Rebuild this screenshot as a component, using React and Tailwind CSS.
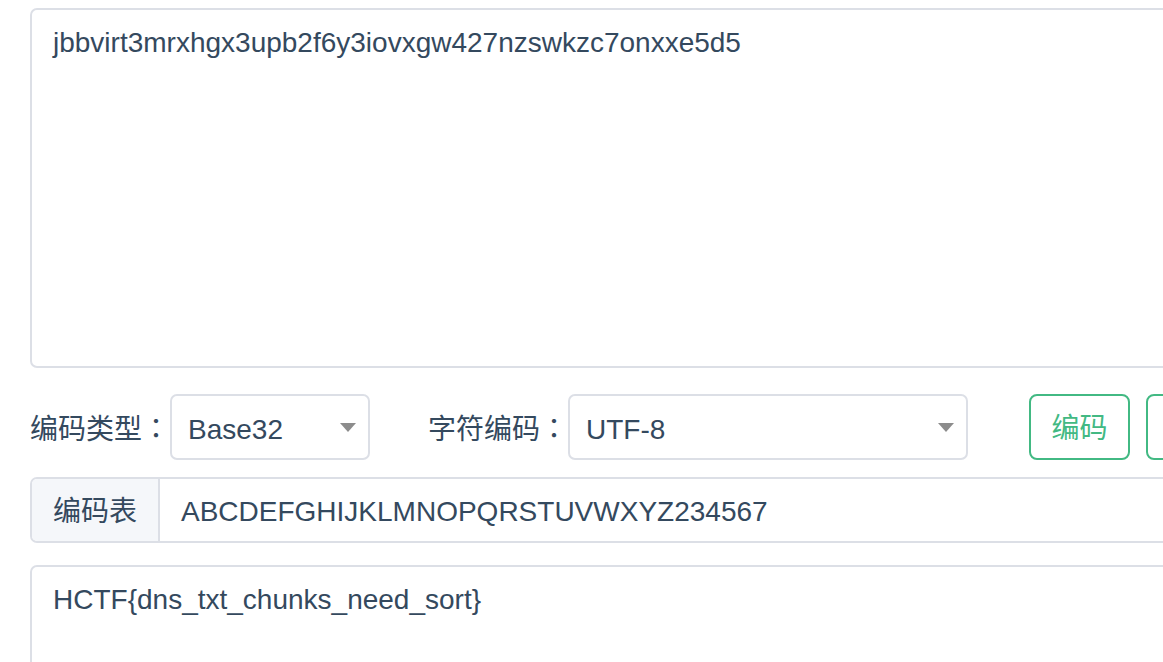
import React from "react";

const font = { fontFamily: '"Liberation Sans", "Noto Sans CJK SC", sans-serif' };

function Arrow() {
  return (
    <svg width="16" height="9" viewBox="0 0 16 9" className="shrink-0">
      <path d="M0 0 L16 0 L8 9 Z" fill="#8c8c8c" />
    </svg>
  );
}

function Select({ value, width }) {
  return (
    <div
      className={`flex items-center justify-between h-[66px] border-2 border-[#dcdfe6] rounded-[7px] pl-[16px] pr-[12px] bg-white shrink-0 ${width}`}
    >
      <span className="pt-[5px]">{value}</span>
      <Arrow />
    </div>
  );
}

function Label({ text, className }) {
  return (
    <span className={`w-[140px] shrink-0 whitespace-nowrap ${className || ""}`}>
      {text}
      <span className="inline-block w-[28px] text-center font-['Noto_Sans_CJK_TC',sans-serif]">：</span>
    </span>
  );
}

export default function App() {
  return (
    <div className="w-full h-[662px] overflow-hidden bg-white text-[#34495e] text-[28px]" style={font}>
      <div className="w-[1400px] pl-[30px] pt-[8px]">
        <div className="h-[360px] border-2 border-[#dcdfe6] rounded-[7px] px-[21px] pt-[12px] leading-[42px]">
          jbbvirt3mrxhgx3upb2f6y3iovxgw427nzswkzc7onxxe5d5
        </div>

        <div className="mt-[26px] flex items-center h-[66px]">
          <Label text="编码类型" className="pt-[2px]" />
          <Select value="Base32" width="w-[200px]" />
          <Label text="字符编码" className="ml-[58px] pt-[2px]" />
          <Select value="UTF-8" width="w-[400px]" />
          <button className="ml-[61px] shrink-0 h-[66px] w-[101px] border-2 border-[#42b983] rounded-[8px] text-[#42b983] bg-white pt-[4px]">
            编码
          </button>
          <button className="ml-[16px] shrink-0 h-[66px] w-[101px] border-2 border-[#42b983] rounded-[8px] text-[#42b983] bg-white pt-[4px]">
            解码
          </button>
        </div>

        <div className="mt-[17px] flex h-[66px] border-2 border-[#dcdfe6] rounded-[7px] overflow-hidden">
          <div className="w-[128px] shrink-0 bg-[#f5f7fa] border-r-2 border-[#dcdfe6] flex items-center justify-center pt-[4px]">
            编码表
          </div>
          <div className="flex items-center pl-[21px] pt-[3px] bg-white flex-1">
            ABCDEFGHIJKLMNOPQRSTUVWXYZ234567
          </div>
        </div>

        <div className="mt-[22px] h-[300px] border-2 border-[#dcdfe6] rounded-[7px] px-[21px] pt-[12px] leading-[42px]">
          HCTF{"{"}dns_txt_chunks_need_sort{"}"}
        </div>
      </div>
    </div>
  );
}
